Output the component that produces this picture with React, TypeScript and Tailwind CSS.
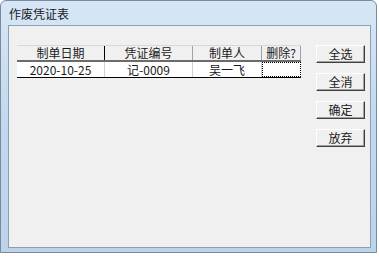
import React from 'react';

const font = { fontFamily: '"Noto Sans CJK SC", "Liberation Sans", sans-serif' };

const columns = [
  { title: '制单日期', width: 'w-[88px]' },
  { title: '凭证编号', width: 'w-[88px]' },
  { title: '制单人', width: 'w-[69px]' },
  { title: '删除?', width: 'w-[39px]' },
];

const row = ['2020-10-25', '记-0009', '吴一飞', ''];

const buttons = ['全选', '全消', '确定', '放弃'];

export default function App() {
  return (
    <div
      className="h-[257px] w-[379px] overflow-hidden bg-white text-[12px] text-[#1a1a1a]"
      style={font}
    >
      <div className="flex h-[253px] w-[377px] flex-col rounded-t-[6px] border border-[#7a8a9c] bg-gradient-to-b from-[#d6e6f6] via-[#c2d8ee] to-[#bcd3ea] pl-[7px] pr-[5px] pb-[4px]">
        <div className="flex h-[24px] shrink-0 items-center pl-[1px] pt-[2px] text-[12px] leading-none">
          作废凭证表
        </div>

        <div className="flex flex-1 border border-[#8d9fb4] bg-[#f0f0f0] pl-[8px] pt-[19px]">
          <div className="w-[284px]">
            <div className="flex h-[17px] border-b-2 border-t border-b-[#6b6b6b] border-t-[#d8d8d8] bg-[#f0f0f0]">
              {columns.map((c, i) => (
                <div
                  key={c.title}
                  className={`${c.width} flex items-center justify-center leading-none ${
                    i === 0 ? 'border-r border-r-black' : 'border-r border-r-[#a0a0a0]'
                  }`}
                >
                  {c.title}
                </div>
              ))}
            </div>
            <div className="flex h-[16px] border-b border-b-black bg-white">
              {row.map((v, i) => (
                <div
                  key={i}
                  className={`${columns[i].width} flex items-center justify-center leading-none ${
                    i < row.length - 1 ? 'border-r border-r-[#d0d0d0]' : 'border border-dotted border-black'
                  }`}
                >
                  {v}
                </div>
              ))}
            </div>
          </div>

          <div className="ml-auto mr-[5px] flex flex-col gap-[10px]">
            {buttons.map((b) => (
              <button
                key={b}
                className="flex h-[18px] w-[49px] items-center justify-center border border-t-white border-l-white border-r-[#404040] border-b-[#404040] bg-[#f0f0f0] leading-none shadow-[inset_-1px_-1px_0_#a0a0a0]"
              >
                {b}
              </button>
            ))}
          </div>
        </div>
      </div>
    </div>
  );
}
